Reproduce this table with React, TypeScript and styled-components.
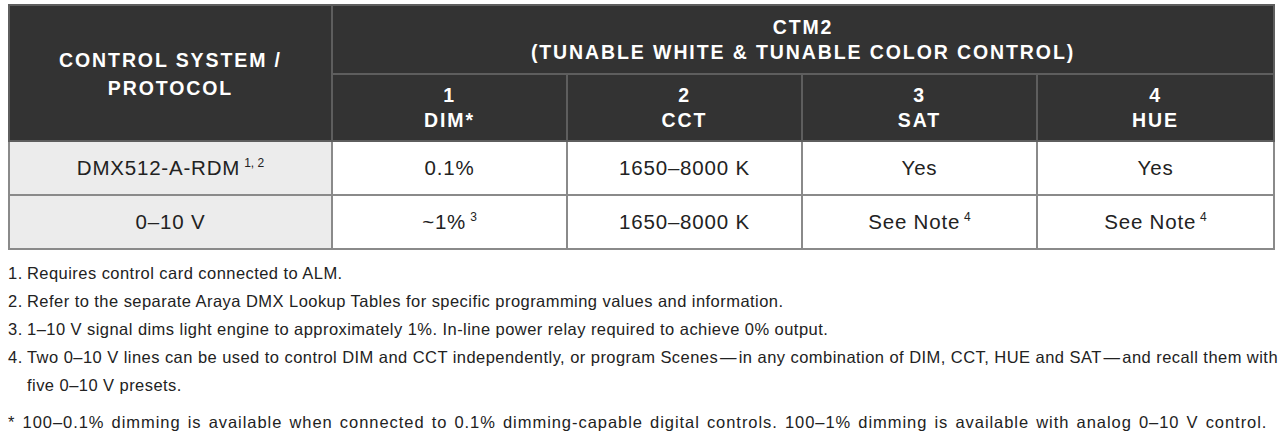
import React from 'react';
import styled, { createGlobalStyle } from 'styled-components';

const GlobalStyle = createGlobalStyle`
  html, body {
    margin: 0;
    padding: 0;
    background: #ffffff;
  }
  body {
    font-family: "Liberation Sans", Arial, Helvetica, sans-serif;
    color: #222222;
  }
`;

const Page = styled.div`
  padding: 4px 0 0 8px;
`;

const Table = styled.table`
  width: 1265px;
  table-layout: fixed;
  border-collapse: collapse;
  border: 2px solid #8a8a8a;
`;

const HeadCell = styled.th<{ $h?: number }>`
  background: #333333;
  color: #ffffff;
  font-weight: bold;
  font-size: 19.5px;
  letter-spacing: 1.9px;
  line-height: 25px;
  text-transform: uppercase;
  text-align: center;
  vertical-align: middle;
  height: ${p => p.$h ?? 65}px;
  padding: 0;
  border: 2px solid #5e5e5e;
`;

const CornerCell = styled(HeadCell)`
  vertical-align: top;
  padding-top: 40px;
  line-height: 28px;
`;

const Cell = styled.td<{ $label?: boolean }>`
  height: 52px;
  padding: 0;
  text-align: center;
  vertical-align: middle;
  font-size: 20.5px;
  letter-spacing: 0.8px;
  color: #222222;
  background: ${p => (p.$label ? '#ececec' : '#ffffff')};
  border: 2px solid #8a8a8a;
`;

const Sup = styled.sup`
  font-size: 12px;
  vertical-align: 8px;
  line-height: 0;
  margin-left: 4px;
  letter-spacing: 0;
`;

const Notes = styled.div`
  width: 1274px;
  margin-top: 9px;
  font-size: 16.5px;
  line-height: 28px;
  color: #222222;
  letter-spacing: 0.45px;
`;

const NoteList = styled.ol`
  list-style: none;
  margin: 0;
  padding: 0;
`;

const NoteItem = styled.li`
  display: flex;
`;

const NoteNum = styled.span`
  flex: 0 0 19px;
`;

const Asterisk = styled.p`
  margin: 9px 0 0;
  letter-spacing: 0.95px;
  word-spacing: 1.6px;
`;

const columns = [
  { num: '1', name: 'DIM*' },
  { num: '2', name: 'CCT' },
  { num: '3', name: 'SAT' },
  { num: '4', name: 'HUE' },
];

const rows = [
  { label: 'DMX512-A-RDM', labelSup: '1, 2', cells: [['0.1%'], ['1650–8000 K'], ['Yes'], ['Yes']] },
  { label: '0–10 V', cells: [['~1%', '3'], ['1650–8000 K'], ['See Note', '4'], ['See Note', '4']] },
];

const notes = [
  'Requires control card connected to ALM.',
  'Refer to the separate Araya DMX Lookup Tables for specific programming values and information.',
  '1–10 V signal dims light engine to approximately 1%. In-line power relay required to achieve 0% output.',
  'Two 0–10 V lines can be used to control DIM and CCT independently, or program Scenes\u200a—\u200ain any combination of DIM, CCT, HUE and SAT\u200a—\u200aand recall them with five 0–10 V presets.',
];

export default function App() {
  return (
    <Page>
      <GlobalStyle />
      <Table>
        <colgroup>
          <col style={{ width: 323 }} />
          <col style={{ width: 235 }} />
          <col style={{ width: 235 }} />
          <col style={{ width: 235 }} />
          <col style={{ width: 237 }} />
        </colgroup>
        <thead>
          <tr>
            <CornerCell rowSpan={2}>
              Control System /<br />Protocol
            </CornerCell>
            <HeadCell colSpan={4} $h={67}>
              CTM2<br />(Tunable White &amp; Tunable Color Control)
            </HeadCell>
          </tr>
          <tr>
            {columns.map(c => (
              <HeadCell key={c.num} $h={65}>
                {c.num}<br />{c.name}
              </HeadCell>
            ))}
          </tr>
        </thead>
        <tbody>
          {rows.map(r => (
            <tr key={r.label}>
              <Cell $label>
                {r.label}
                {r.labelSup && <Sup>{r.labelSup}</Sup>}
              </Cell>
              {r.cells.map(([text, sup], i) => (
                <Cell key={i}>
                  {text}
                  {sup && <Sup>{sup}</Sup>}
                </Cell>
              ))}
            </tr>
          ))}
        </tbody>
      </Table>
      <Notes>
        <NoteList>
          {notes.map((n, i) => (
            <NoteItem key={i}>
              <NoteNum>{i + 1}.</NoteNum>
              <span>{n}</span>
            </NoteItem>
          ))}
        </NoteList>
        <Asterisk>
          * 100–0.1% dimming is available when connected to 0.1% dimming-capable digital controls. 100–1% dimming is available with analog 0–10 V control.
        </Asterisk>
      </Notes>
    </Page>
  );
}
